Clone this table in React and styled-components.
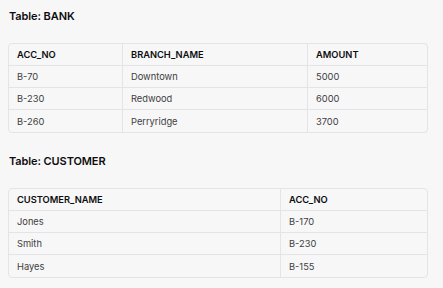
import React from "react";
import styled, { createGlobalStyle } from "styled-components";

const Global = createGlobalStyle`
  html, body { margin: 0; padding: 0; background: #f7f7f8; }
  body { font-family: Inter, "Noto Sans", sans-serif; }
`;

const Page = styled.div`
  width: 443px;
  height: 288px;
  box-sizing: border-box;
  padding: 8px 15px 0 8px;
  display: flex;
  flex-direction: column;
  gap: 20px;
`;

const Section = styled.section`
  display: flex;
  flex-direction: column;
  gap: 19px;
`;

const Title = styled.h3`
  margin: 0 0 0 1px;
  font-size: 11px;
  line-height: 16px;
  font-weight: 600;
  color: #0d0d0d;
  letter-spacing: -0.1px;
`;

const Table = styled.table`
  width: 420px;
  border-collapse: separate;
  border-spacing: 0;
  border: 1px solid #e4e4e7;
  border-radius: 4px;
  table-layout: fixed;
  font-size: 9.3px;
`;

const Cell = styled.td`
  height: 22px;
  padding: 0 8px;
  box-sizing: border-box;
  text-align: left;
  vertical-align: middle;
  color: ${(p) => (p.$head ? "#0d0d0d" : "#404040")};
  font-weight: ${(p) => (p.$head ? 600 : 400)};
  border-right: ${(p) => (p.$last ? "none" : "1px solid #e4e4e7")};
  border-bottom: ${(p) => (p.$bottom ? "none" : "1px solid #e4e4e7")};
`;

function DataTable({ columns, widths, rows }) {
  const all = [columns, ...rows];
  return (
    <Table>
      <colgroup>
        {widths.map((w, i) => (
          <col key={i} style={{ width: w }} />
        ))}
      </colgroup>
      <tbody>
        {all.map((r, ri) => (
          <tr key={ri}>
            {r.map((c, ci) => (
              <Cell
                as={ri === 0 ? "th" : "td"}
                key={ci}
                $head={ri === 0}
                $last={ci === r.length - 1}
                $bottom={ri === all.length - 1}
              >
                {c}
              </Cell>
            ))}
          </tr>
        ))}
      </tbody>
    </Table>
  );
}

export default function App() {
  return (
    <>
      <Global />
      <Page>
        <Section>
          <Title>Table: BANK</Title>
          <DataTable
            columns={["ACC_NO", "BRANCH_NAME", "AMOUNT"]}
            widths={[114, 185, 119]}
            rows={[
              ["B-70", "Downtown", "5000"],
              ["B-230", "Redwood", "6000"],
              ["B-260", "Perryridge", "3700"],
            ]}
          />
        </Section>
        <Section>
          <Title>Table: CUSTOMER</Title>
          <DataTable
            columns={["CUSTOMER_NAME", "ACC_NO"]}
            widths={[272, 146]}
            rows={[
              ["Jones", "B-170"],
              ["Smith", "B-230"],
              ["Hayes", "B-155"],
            ]}
          />
        </Section>
      </Page>
    </>
  );
}
